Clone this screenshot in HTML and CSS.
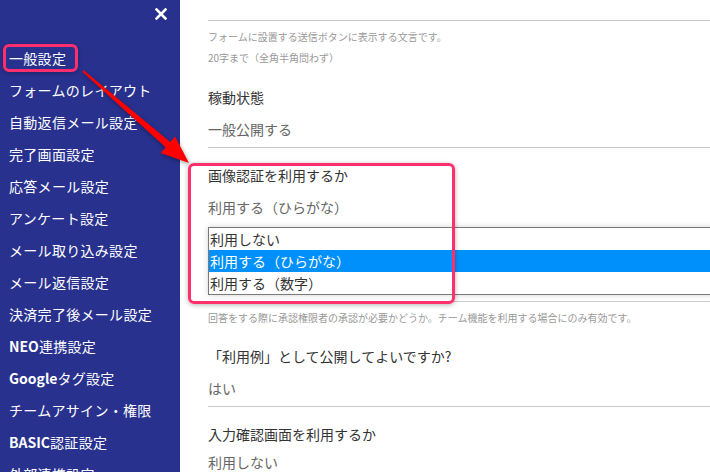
FILE: index.html
```html
<!doctype html>
<html lang="ja">
    <head>
        <meta charset="UTF-8" />
        <meta name="viewport" content="width=device-width, initial-scale=1.0" />
        <title>フォーム設定</title>
        <link rel="stylesheet" href="styles.css">
    </head>
    <body>
        <aside class="sidebar">
            <button class="close-btn" type="button" aria-label="閉じる">
                <svg width="12" height="12" viewBox="0 0 12 12">
                    <path d="M1.5 1.5 L10.5 10.5 M10.5 1.5 L1.5 10.5" stroke="#fff" stroke-width="2.6" stroke-linecap="square" />
                </svg>
            </button>
            <nav class="menu">
                <a href="#">一般設定</a>
                <a href="#">フォームのレイアウト</a>
                <a href="#">自動返信メール設定</a>
                <a href="#">完了画面設定</a>
                <a href="#">応答メール設定</a>
                <a href="#">アンケート設定</a>
                <a href="#">メール取り込み設定</a>
                <a href="#">メール返信設定</a>
                <a href="#">決済完了後メール設定</a>
                <a href="#"><b>NEO</b>連携設定</a>
                <a href="#"><b>Google</b>タグ設定</a>
                <a href="#">チームアサイン・権限</a>
                <a href="#"><b>BASIC</b>認証設定</a>
                <a href="#">外部連携設定</a>
            </nav>
        </aside>

        <main class="content">
            <div class="field field-top"></div>
            <p class="help help-first">フォームに設置する送信ボタンに表示する文言です。</p>
            <p class="help help-second">20字まで（全角半角問わず）</p>

            <div class="field">
                <div class="field-label label-first">稼動状態</div>
                <div class="field-value">一般公開する</div>
            </div>

            <div class="field field-select">
                <div class="field-label">画像認証を利用するか</div>
                <div class="field-value">利用する（ひらがな）</div>
                <div class="listbox">
                    <div class="option">利用しない</div>
                    <div class="option selected">利用する（ひらがな）</div>
                    <div class="option">利用する（数字）</div>
                </div>
            </div>
            <p class="help help-after">回答をする際に承認権限者の承認が必要かどうか。チーム機能を利用する場合にのみ有効です。</p>

            <div class="field">
                <div class="field-label label-after-help">「利用例」として公開してよいですか?</div>
                <div class="field-value">はい</div>
            </div>

            <div class="field">
                <div class="field-label">入力確認画面を利用するか</div>
                <div class="field-value value-tight">利用しない</div>
            </div>
        </main>

        <!-- annotation overlays -->
        <div class="mark mark-menu"></div>
        <div class="mark mark-field"></div>
        <svg class="arrow" width="200" height="170" viewBox="0 0 200 170">
            <polygon
                points="83.7,70.2 170.2,142.1 175.1,136.4 189,163 160.7,153 165.6,147.3 82.3,71.8"
                fill="#ff0000"
            />
        </svg>
    </body>
</html>
```

FILE: styles.css
```css
* {
    margin: 0;
    padding: 0;
    box-sizing: border-box;
}

body {
    font-family: 'Noto Sans CJK JP', 'Noto Sans', sans-serif;
    width: 710px;
    height: 472px;
    overflow: hidden;
    display: flex;
    background-color: white;
}

/* Sidebar */
.sidebar {
    width: 180px;
    flex-shrink: 0;
    background-color: #28318e;
    position: relative;
}

.close-btn {
    position: absolute;
    top: 7px;
    left: 154px;
    width: 14px;
    height: 14px;
    background: none;
    border: none;
    display: flex;
    align-items: center;
    justify-content: center;
    cursor: pointer;
}

.menu {
    display: flex;
    flex-direction: column;
    padding-top: 42px;
}

.menu a {
    display: block;
    padding-left: 9px;
    line-height: 32px;
    font-size: 14px;
    font-weight: 400;
    letter-spacing: 0.3px;
    color: white;
    text-decoration: none;
    white-space: nowrap;
}

.menu b {
    font-weight: 700;
    letter-spacing: 0;
}

/* Main content */
.content {
    flex: 1;
    padding-left: 28px;
    margin-right: -4px;
    color: #333;
}

.field {
    border-bottom: 1px solid #c9c9c9;
    padding-bottom: 8px;
}

.field-top {
    height: 21px;
    padding: 0;
}

.field-label {
    margin-top: 17px;
    font-size: 14px;
    line-height: 20px;
    color: #333;
}

.label-first {
    margin-top: 22px;
}

.label-after-help {
    margin-top: 21px;
}

.field-value {
    margin-top: 12px;
    font-size: 14px;
    line-height: 20px;
    color: #666;
}

.value-tight {
    margin-top: 8px;
}

.help {
    font-size: 10px;
    line-height: 14px;
    color: #999;
}

.help-first {
    margin-top: 9px;
}

.help-second {
    margin-top: 7px;
}

.help-after {
    margin-top: 9px;
}

.field-select {
    padding-bottom: 6px;
}

/* Listbox */
.listbox {
    margin-top: 10px;
    border: 1px solid #7a7a7a;
    background-color: white;
    box-shadow: 0 0 6px rgba(0, 0, 0, 0.18);
}

.option {
    height: 22px;
    line-height: 22px;
    padding-left: 1px;
    font-size: 14px;
    color: #333;
}

.option.selected {
    background-color: #0090fb;
    color: white;
}

/* Annotation marks */
.mark {
    position: absolute;
    border: 3px solid #ff2e6c;
    border-radius: 6px;
    box-shadow: 0 1px 5px rgba(0, 0, 0, 0.3);
}

.mark-menu {
    left: 3px;
    top: 44px;
    width: 75px;
    height: 28px;
}

.mark-field {
    left: 188px;
    top: 163px;
    width: 267px;
    height: 141px;
}

.arrow {
    position: absolute;
    left: 0;
    top: 0;
    filter: drop-shadow(1px 2px 2px rgba(0, 0, 0, 0.35));
}
```
